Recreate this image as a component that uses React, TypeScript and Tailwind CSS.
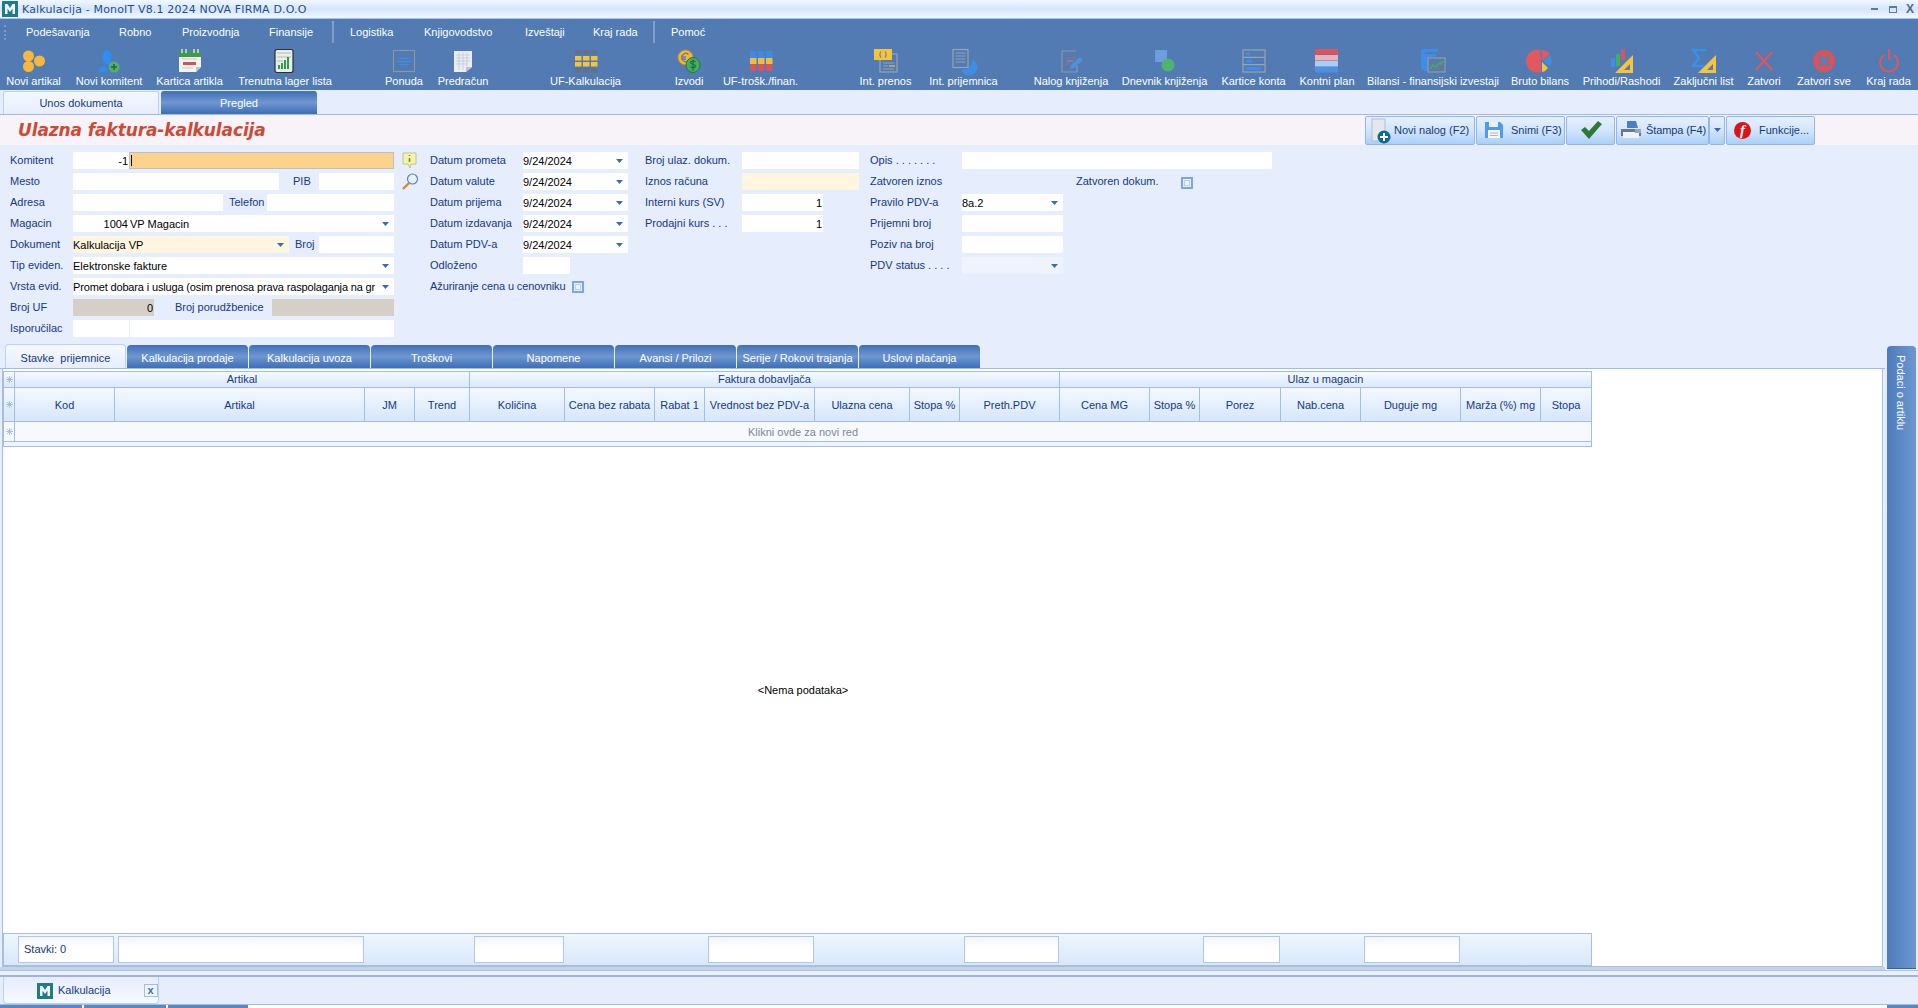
import React from 'react';

const NAVY = 'text-[#15397f]';

const menus = [
  { label: 'Podešavanja', cls: 'w-[64px] ml-[20px]' },
  { label: 'Robno', cls: 'w-[34px] ml-[29px]' },
  { label: 'Proizvodnja', cls: 'w-[58px] ml-[29px]' },
  { label: 'Finansije', cls: 'w-[45px] ml-[29px]' },
  { sep: true, cls: 'ml-[18px]' },
  { label: 'Logistika', cls: 'w-[46px] ml-[16px]' },
  { label: 'Knjigovodstvo', cls: 'w-[72px] ml-[28px]' },
  { label: 'Izveštaji', cls: 'w-[40px] ml-[29px]' },
  { label: 'Kraj rada', cls: 'w-[44px] ml-[28px]' },
  { sep: true, cls: 'ml-[16px]' },
  { label: 'Pomoć', cls: 'w-[34px] ml-[16px]' },
];

const IconNoviArtikal = () => (
  <>
    <circle cx="6.5" cy="7" r="5.5" fill="#f5b73c" />
    <circle cx="17.5" cy="12" r="5.5" fill="#f5b73c" />
    <circle cx="6.5" cy="17.5" r="5.5" fill="#f5b73c" />
  </>
);
const IconNoviKomitent = () => (
  <>
    <ellipse cx="10" cy="8" rx="4.500" ry="7.500" fill="#2f8cf0" />
    <path d="M2 23c0-4 2-6 4.500-6s4 2 4 6z" fill="#2f8cf0" />
    <circle cx="17" cy="18" r="5.5" fill="#4fb36f" />
    <path d="M17 15v6M14 18h6" stroke="#1d6a3a" strokeWidth="1.6" />
  </>
);
const IconKartica = () => (
  <>
    <path d="M1 3h22v15l-5 5H1z" fill="#f3f4f0" />
    <rect x="1" y="2" width="22" height="6" fill="#3f9a4c" />
    <path d="M4 0v4M8 0v4M16 0v4M20 0v4" stroke="#dfe6dc" strokeWidth="1.4" />
    <rect x="5" y="13" width="13" height="3" fill="#d6525a" />
    <path d="M4 10h15M4 19h11" stroke="#c5ccc4" strokeWidth="1" />
    <path d="M18 23v-5h5z" fill="#bfc6bd" />
  </>
);
const IconLager = () => (
  <>
    <rect x="2" y="0.5" width="18" height="23" rx="2" fill="#e9eee8" stroke="#27303a" strokeWidth="1.2" />
    <path d="M4 4h14M4 8h14M4 12h6" stroke="#b3bcb5" strokeWidth="1" />
    <path d="M6 20v-4M9 20v-6M12 20v-9M15 20v-12" stroke="#2f9c49" strokeWidth="2" />
  </>
);
const IconPonuda = () => (
  <>
    <rect x="1.5" y="1.5" width="21" height="21" fill="none" stroke="#8f96a3" strokeWidth="1.2" />
    <path d="M7 9.5h10M5 12.5h14M7 15.5h10" stroke="#3c8ee6" strokeWidth="1.2" />
  </>
);
const IconPredracun = () => (
  <>
    <path d="M3 2h18v16l-6 5H3z" fill="#e9edf4" />
    <path d="M5 6h14M5 9h14M5 12h14M5 15h12M8 3v18M12 3v18M16 3v14" stroke="#c3cad8" strokeWidth="0.8" />
    <path d="M15 23v-5h6z" fill="#b9c0cd" />
  </>
);
const IconUfKalk = () => (
  <>
    {[1, 7, 13, 19].map((y, r) =>
      [1, 9, 17].map((x) => (
        <rect key={`${x}-${y}`} x={x} y={y} width="6.5" height="4.5" fill={r === 0 || r === 3 ? '#5e7290' : '#f5c33c'} />
      ))
    )}
  </>
);
const IconIzvodi = () => (
  <>
    <circle cx="8.5" cy="8.5" r="7.5" fill="#f0b63c" stroke="#c98a1e" strokeWidth="1" />
    <path d="M11.5 5.5a4 4 0 1 0 0 6M4 8h5M4 10h5" stroke="#6f7f90" strokeWidth="1.3" fill="none" />
    <ellipse cx="16" cy="16" rx="7" ry="7.5" fill="#45ad62" stroke="#237a3d" strokeWidth="1" />
    <path d="M18.5 13c-1-1.5-5-1.5-5 .6 0 2.4 5 1 5 3.6 0 1.8-4 1.8-5 .3M16 10.5v11" stroke="#1e6a37" strokeWidth="1.1" fill="none" />
  </>
);
const IconTrosk = () => (
  <>
    {[1, 9, 17].map((x) => (
      <g key={x}>
        <rect x={x} y="2" width="6.5" height="7" fill="#3d8be0" />
        <rect x={x} y="9" width="6.5" height="6" fill="#f3bb3f" />
        <rect x={x} y="15" width="6.5" height="7" rx="1.5" fill="#d9555d" />
      </g>
    ))}
  </>
);
const IconIntPrenos = () => (
  <>
    <rect x="6" y="5" width="17" height="18" fill="none" stroke="#9aa2ad" strokeWidth="1.2" />
    <path d="M9 14h11M9 17h5M9 20h11" stroke="#9aa2ad" strokeWidth="1" />
    <path d="M15 17h6" stroke="#f5c33c" strokeWidth="1.2" />
    <rect x="0" y="0" width="18" height="11" fill="#f5c33c" />
    <path d="M7 2.5c-1.5 2-1.5 4 0 6M11 2.5c1.5 2 1.5 4 0 6" stroke="#7b7f84" strokeWidth="1.2" fill="none" />
  </>
);
const IconIntPrijem = () => (
  <>
    <rect x="1" y="0.5" width="15" height="18" fill="none" stroke="#9aa2ad" strokeWidth="1.2" />
    <path d="M3.5 4h10M3.5 7h10M3.5 10h10M3.5 13h10" stroke="#9aa2ad" strokeWidth="1" />
    <path d="M20 10a8.500 8.500 0 1 1-11 11c4 0 7-1 9-4 1.500-2 2-4 2-7z" fill="#3c8ee6" />
  </>
);
const IconNalog = () => (
  <>
    <path d="M17 2H3v21h15v-6" fill="none" stroke="#8f96a3" strokeWidth="1.2" />
    <path d="M6 9h10M6 15h5" stroke="#d9555d" strokeWidth="1.2" />
    <path d="M8 12h6" stroke="#8f96a3" strokeWidth="1" />
    <path d="M11 20l1-4 9-8 3 3-9 8z" fill="#4d90dd" />
  </>
);
const IconDnevnik = () => (
  <>
    <rect x="2" y="1" width="12" height="12" fill="#6d9ddc" />
    <circle cx="15" cy="16" r="6.500" fill="#4fb36f" />
  </>
);
const IconKartice = () => (
  <>
    <rect x="1" y="1" width="22" height="22" fill="none" stroke="#9aa2ad" strokeWidth="1.2" />
    <path d="M1 8.300h22M1 15.600h22" stroke="#9aa2ad" strokeWidth="1.2" />
    <rect x="4" y="3.300" width="4" height="3" fill="#3c8ee6" />
    <rect x="4" y="10.600" width="6" height="3" fill="#3c8ee6" />
    <rect x="4" y="18" width="15" height="3" fill="#3c8ee6" />
  </>
);
const IconKontni = () => (
  <>
    <rect x="0" y="0" width="23" height="5.500" fill="#d9555d" />
    <rect x="0" y="6" width="23" height="5.500" fill="#eeb0b8" />
    <rect x="0" y="12" width="23" height="5.500" fill="#a9cdf5" />
    <rect x="0" y="18" width="23" height="5.500" fill="#4b91e3" />
  </>
);
const IconBilansi = () => (
  <>
    <path d="M0 2a2 2 0 0 1 2-2h15v3H4v18H2a2 2 0 0 1-2-2z" fill="#3c8ee6" />
    <path d="M3 5h12v3H7v14H3z" fill="#3c8ee6" />
    <rect x="7" y="9" width="17" height="14" fill="#5d7aa5" stroke="#9aa2ad" strokeWidth="1" />
    <path d="M9 20l3-4 3 2 3-4 2 1 2-3" stroke="#3fb05f" strokeWidth="1.400" fill="none" />
  </>
);
const IconBruto = () => (
  <>
    <path d="M13 12L12.500 1A11.500 11.500 0 1 0 13 23z" fill="#de5a60" />
    <path d="M14 1a11 11 0 0 1 8 4l-8 7z" fill="#de5a60" />
    <path d="M22 6a11 11 0 0 1 0 11l-7-5z" fill="#3c8ee6" />
    <path d="M14 13l6 6a9 9 0 0 1-6 4z" fill="#f5c33c" />
  </>
);
const IconPrihodi = () => (
  <>
    <rect x="1" y="9" width="4" height="9" fill="#3c8ee6" />
    <rect x="6" y="5" width="4" height="12" fill="#3fb05f" />
    <rect x="11" y="0" width="4" height="11" fill="#d9555d" />
    <path d="M23 6v18H5z" fill="#f5c33c" />
    <path d="M20 15v6h-6z" fill="#5d7aa5" />
  </>
);
const IconZakljucni = () => (
  <>
    <path d="M14 1H1l6 8-6 8h12" fill="none" stroke="#3c8ee6" strokeWidth="2.600" />
    <path d="M24 6v18H6z" fill="#f5c33c" />
    <path d="M21 15v6h-6z" fill="#5d7aa5" />
  </>
);
const IconZatvori = () => <path d="M4 3l16 18M20 3L4 21" stroke="#e0565a" strokeWidth="2" />;
const IconZatvoriSve = () => (
  <>
    <circle cx="12" cy="12" r="11" fill="#dd5258" />
    <path d="M7 7l10 10M17 7L7 17" stroke="#5b7eb2" strokeWidth="3.500" />
  </>
);
const IconKraj = () => (
  <>
    <path d="M7 6a9 9 0 1 0 10 0" fill="none" stroke="#e0565a" strokeWidth="2" />
    <path d="M12 0v11" stroke="#e0565a" strokeWidth="2" />
  </>
);

const tools = [
  { label: 'Novi artikal', cls: 'w-[53px] ml-[7px]', icon: <IconNoviArtikal /> },
  { label: 'Novi komitent', cls: 'w-[64px] ml-[17px]', icon: <IconNoviKomitent /> },
  { label: 'Kartica artikla', cls: 'w-[65px] ml-[16px]', icon: <IconKartica /> },
  { label: 'Trenutna lager lista', cls: 'w-[92px] ml-[17px]', icon: <IconLager /> },
  { label: 'Ponuda', cls: 'w-[36px] ml-[55px]', icon: <IconPonuda /> },
  { label: 'Predračun', cls: 'w-[48px] ml-[17px]', icon: <IconPredracun /> },
  { label: 'UF-Kalkulacija', cls: 'w-[65px] ml-[66px]', icon: <IconUfKalk /> },
  { label: 'Izvodi', cls: 'w-[28px] ml-[57px]', icon: <IconIzvodi /> },
  { label: 'UF-trošk./finan.', cls: 'w-[75px] ml-[20px]', icon: <IconTrosk /> },
  { label: 'Int. prenos', cls: 'w-[53px] ml-[61px]', icon: <IconIntPrenos /> },
  { label: 'Int. prijemnica', cls: 'w-[69px] ml-[17px]', icon: <IconIntPrijem /> },
  { label: 'Nalog knjiženja', cls: 'w-[72px] ml-[37px]', icon: <IconNalog /> },
  { label: 'Dnevnik knjiženja', cls: 'w-[83px] ml-[16px]', icon: <IconDnevnik /> },
  { label: 'Kartice konta', cls: 'w-[63px] ml-[16px]', icon: <IconKartice /> },
  { label: 'Kontni plan', cls: 'w-[54px] ml-[15px]', icon: <IconKontni /> },
  { label: 'Bilansi - finansijski izvestaji', cls: 'w-[128px] ml-[15px]', icon: <IconBilansi /> },
  { label: 'Bruto bilans', cls: 'w-[56px] ml-[15px]', icon: <IconBruto /> },
  { label: 'Prihodi/Rashodi', cls: 'w-[75px] ml-[16px]', icon: <IconPrihodi /> },
  { label: 'Zaključni list', cls: 'w-[57px] ml-[16px]', icon: <IconZakljucni /> },
  { label: 'Zatvori', cls: 'w-[34px] ml-[15px]', icon: <IconZatvori /> },
  { label: 'Zatvori sve', cls: 'w-[54px] ml-[16px]', icon: <IconZatvoriSve /> },
  { label: 'Kraj rada', cls: 'w-[45px] ml-[15px]', icon: <IconKraj /> },
];

const innerTabs = [
  'Kalkulacija prodaje',
  'Kalkulacija uvoza',
  'Troškovi',
  'Napomene',
  'Avansi / Prilozi',
  'Serije / Rokovi trajanja',
  'Uslovi plaćanja',
];

const groups = [
  { label: 'Artikal', cls: 'w-[455px]' },
  { label: 'Faktura dobavljača', cls: 'w-[590px]' },
  { label: 'Ulaz u magacin', cls: 'w-[531px]' },
];

const columns = [
  { label: 'Kod', cls: 'w-[100px]' },
  { label: 'Artikal', cls: 'w-[250px]' },
  { label: 'JM', cls: 'w-[50px]' },
  { label: 'Trend', cls: 'w-[55px]' },
  { label: 'Količina', cls: 'w-[95px]' },
  { label: 'Cena bez rabata', cls: 'w-[90px]' },
  { label: 'Rabat 1', cls: 'w-[50px]' },
  { label: 'Vrednost bez PDV-a', cls: 'w-[110px]' },
  { label: 'Ulazna cena', cls: 'w-[95px]' },
  { label: 'Stopa %', cls: 'w-[50px]' },
  { label: 'Preth.PDV', cls: 'w-[100px]' },
  { label: 'Cena MG', cls: 'w-[90px]' },
  { label: 'Stopa %', cls: 'w-[50px]' },
  { label: 'Porez', cls: 'w-[81px]' },
  { label: 'Nab.cena', cls: 'w-[80px]' },
  { label: 'Duguje mg', cls: 'w-[100px]' },
  { label: 'Marža (%) mg', cls: 'w-[80px]' },
  { label: 'Stopa', cls: 'w-[50px]' },
];

const summaryCells = [
  { text: 'Stavki: 0', cls: 'w-[96px] ml-[14px]' },
  { text: '', cls: 'w-[246px] ml-[4px]' },
  { text: '', cls: 'w-[90px] ml-[110px]' },
  { text: '', cls: 'w-[106px] ml-[144px]' },
  { text: '', cls: 'w-[95px] ml-[150px]' },
  { text: '', cls: 'w-[77px] ml-[144px]' },
  { text: '', cls: 'w-[96px] ml-[84px]' },
];

const Arrow = () => (
  <svg width="7" height="4" viewBox="0 0 7 4" className="shrink-0">
    <path d="M0 0h7L3.500 4z" fill="#3d6cae" />
  </svg>
);

const Label = ({ text, cls }: { text: string; cls: string }) => (
  <span className={`${cls} ${NAVY} shrink-0 whitespace-nowrap`}>{text}</span>
);

const Row = ({ children }: { children: React.ReactNode }) => (
  <div className="flex items-center h-[17px]">{children}</div>
);

const Input = ({ cls, text, arrow, right }: { cls: string; text?: string; arrow?: boolean; right?: boolean }) => (
  <div className={`${cls} h-[17px] shrink-0 flex items-center text-black overflow-hidden ${right ? 'pr-[1px]' : ''}`}>
    <span className="whitespace-nowrap overflow-hidden flex-1 min-w-0 leading-[14px]">
      {right ? <span className="block text-right">{text}</span> : text}
    </span>
    {arrow && (
      <span className="w-[17px] shrink-0 flex justify-center">
        <Arrow />
      </span>
    )}
  </div>
);

const Check = () => (
  <div className="w-[12px] h-[12px] border-2 border-[#7ba6de] bg-[#e6edfd] flex items-center justify-center shrink-0">
    <div className="w-[6px] h-[6px] border border-[#c0cfe8] bg-[#eef3fd]" />
  </div>
);

const HeadButton = ({ cls, children }: { cls: string; children: React.ReactNode }) => (
  <div className={`${cls} h-[29px] shrink-0 flex items-center border border-[#94b6e6] rounded-[2px] bg-linear-to-b from-[#e6f0fd] via-[#d2e5fb] to-[#a9d0f7] ${NAVY}`}>
    {children}
  </div>
);

const Sel = () => (
  <svg width="7" height="7" viewBox="0 0 7 7" className="shrink-0">
    <path d="M3.500 0v7M0 3.500h7M1 1l5 5M6 1L1 6" stroke="#9db5d6" strokeWidth="0.8" />
  </svg>
);

const AppIcon = ({ size }: { size: number }) => (
  <svg width={size} height={size} viewBox="0 0 16 16" className="shrink-0">
    <rect width="16" height="16" fill="#1f7a8c" />
    <path d="M3 13V3h2.500L8 7l2.500-4H13v10h-2.500V7.500L8 11 5.500 7.500V13z" fill="#f2f6f8" />
  </svg>
);

export default function App() {
  return (
    <div className="w-[1918px] h-[1008px] flex flex-col overflow-hidden bg-[#e6edfd] text-[11px] leading-none font-['Liberation_Sans',Arial,sans-serif]">
      {/* title bar */}
      <div className="h-[19px] shrink-0 flex items-center border-b border-[#a9c3e8] bg-linear-to-b from-[#f1f7ff] via-[#d5e6fd] to-[#f1f7ff]">
        <span className="ml-[2px]"><AppIcon size={16} /></span>
        <span className="ml-[4px] font-['DejaVu_Sans',sans-serif] text-[11px] tracking-[0.15px] text-[#1f4f8c]">Kalkulacija - MonoIT V8.1 2024 NOVA FIRMA D.O.O</span>
        <div className="ml-auto flex items-center">
          <div className="w-[7px] h-[2px] bg-[#5d7aa5]" />
          <div className="ml-[11px] w-[8px] h-[7px] border border-[#5d7aa5] border-t-2" />
          <span className="ml-[9px] mr-[4px] font-bold text-[12px] text-[#4a6a98]">X</span>
        </div>
      </div>

      {/* menu + toolbar */}
      <div className="h-[71px] shrink-0 bg-[#517bb2] text-white">
        <div className="h-[26px] flex items-center">
          <div className="ml-[4px] h-[15px] w-[2px] border-l-2 border-dotted border-[#7d9cc6]" />
          {menus.map((m, i) =>
            m.sep ? (
              <div key={i} className={`${m.cls} h-[22px] w-[2px] bg-[#7f9fcc]`} />
            ) : (
              <span key={i} className={`${m.cls} whitespace-nowrap`}>{m.label}</span>
            )
          )}
        </div>
        <div className="h-[45px] flex">
          {tools.map((t) => (
            <div key={t.label} className={`${t.cls} shrink-0 flex flex-col items-center pt-[4px]`}>
              <svg width="24" height="24" viewBox="0 0 24 24" className="shrink-0 overflow-visible">{t.icon}</svg>
              <span className="mt-[3px] whitespace-nowrap">{t.label}</span>
            </div>
          ))}
        </div>
      </div>

      {/* view tabs */}
      <div className="h-[24px] shrink-0 flex items-end pl-[3px] gap-[2px] pt-[1px]">
        <div className={`w-[156px] h-[23px] flex items-center justify-center rounded-t-[3px] border border-b-0 border-[#b9d2f2] bg-linear-to-b from-[#f4f9ff] to-[#e6edfd] ${NAVY}`}>Unos dokumenta</div>
        <div className="w-[156px] h-[23px] pt-[2px] flex items-center justify-center rounded-t-[3px] text-white bg-linear-to-b from-[#3f6fb8] via-[#6f97d0] to-[#3d6eb8]">Pregled</div>
      </div>

      {/* document */}
      <div className="h-[856px] shrink-0 flex flex-col border-t border-[#9dbcea]">
        <div className="h-[30px] shrink-0 flex items-center bg-[#f8f3f8] pl-[18px] pr-[103px]">
          <span className="font-['DejaVu_Sans',sans-serif] font-bold italic text-[17px] text-[#cc4a35] tracking-[-0.1px]">Ulazna faktura-kalkulacija</span>
          <div className="ml-auto flex gap-[1px]">
            <HeadButton cls="w-[110px]">
              <svg width="20" height="28" viewBox="0 0 20 28" className="ml-[5px] shrink-0">
                <rect x="1" y="3" width="13" height="22" fill="#e4e8ee" stroke="#b8bec8" />
                <circle cx="13" cy="21" r="6.500" fill="#0f6a92" />
                <path d="M13 17v8M9 21h8" stroke="#fff" strokeWidth="2" />
              </svg>
              <span className="ml-[3px] whitespace-nowrap">Novi nalog (F2)</span>
            </HeadButton>
            <HeadButton cls="w-[89px]">
              <svg width="18" height="18" viewBox="0 0 18 18" className="ml-[8px] shrink-0">
                <path d="M0 1h15l3 3v13H0z" fill="#4f9bea" />
                <rect x="4" y="1" width="9" height="5" fill="#e9f2fc" />
                <rect x="3" y="9" width="12" height="8" fill="#f4f7fb" />
                <path d="M5 12h8M5 14.500h8" stroke="#a8b4c4" />
              </svg>
              <span className="ml-[8px] whitespace-nowrap">Snimi (F3)</span>
            </HeadButton>
            <HeadButton cls="w-[49px] justify-center">
              <svg width="22" height="18" viewBox="0 0 22 18">
                <path d="M1 9l4-3 4 4L18 0l4 3L9 18z" fill="#2c7a35" />
              </svg>
            </HeadButton>
            <HeadButton cls="w-[93px]">
              <svg width="22" height="20" viewBox="0 0 22 20" className="ml-[3px] shrink-0">
                <path d="M7 1h9l2 7H7z" fill="#4a7fc4" />
                <path d="M1 9h20v7H1z" fill="#6a7788" />
                <path d="M3 12h16v6H3z" fill="#eef1f5" />
                <path d="M15 9h6v4h-6z" fill="#9aa6b4" />
              </svg>
              <span className="ml-[4px] whitespace-nowrap tracking-[-0.1px]">Štampa (F4)</span>
            </HeadButton>
            <HeadButton cls="w-[16px] -ml-[1px] justify-center"><Arrow /></HeadButton>
            <HeadButton cls="w-[89px]">
              <span className="ml-[7px] w-[17px] h-[17px] rounded-full bg-[#d9141b] flex items-center justify-center font-['Liberation_Serif',serif] font-bold italic text-[15px] text-white shrink-0">f</span>
              <span className="ml-[8px] whitespace-nowrap">Funkcije...</span>
            </HeadButton>
          </div>
        </div>

        {/* form */}
        <div className="h-[200px] shrink-0 flex pt-[7px]">
          <div className="w-[394px] shrink-0 pl-[10px] flex flex-col gap-[4px]">
            <Row>
              <Label text="Komitent" cls="w-[63px]" />
              <Input cls="w-[56px] bg-white" text="-1" right />
              <div className="flex-1 h-[17px] bg-[#fdd28a] border border-[#b7bfd0] flex items-center pl-[1px]"><div className="w-[1px] h-[11px] bg-black" /></div>
            </Row>
            <Row>
              <Label text="Mesto" cls="w-[63px]" />
              <Input cls="w-[206px] bg-white" />
              <Label text="PIB" cls="w-[40px] pl-[14px]" />
              <Input cls="w-[75px] bg-white" />
            </Row>
            <Row>
              <Label text="Adresa" cls="w-[63px]" />
              <Input cls="w-[150px] bg-white" />
              <Label text="Telefon" cls="w-[44px] pl-[6px]" />
              <Input cls="w-[127px] bg-white" />
            </Row>
            <Row>
              <Label text="Magacin" cls="w-[63px]" />
              <Input cls="w-[56px] bg-white" text="1004" right />
              <Input cls="w-[265px] bg-white pl-[1px]" text="VP Magacin" arrow />
            </Row>
            <Row>
              <Label text="Dokument" cls="w-[63px]" />
              <Input cls="w-[216px] bg-[#fff6e0]" text="Kalkulacija VP" arrow />
              <Label text="Broj" cls="w-[30px] pl-[6px]" />
              <Input cls="w-[75px] bg-white" />
            </Row>
            <Row>
              <Label text="Tip eviden." cls="w-[63px]" />
              <Input cls="w-[321px] bg-white" text="Elektronske fakture" arrow />
            </Row>
            <Row>
              <Label text="Vrsta evid." cls="w-[63px]" />
              <Input cls="w-[321px] bg-white tracking-[-0.15px]" text="Promet dobara i usluga (osim prenosa prava raspolaganja na gr" arrow />
            </Row>
            <Row>
              <Label text="Broj UF" cls="w-[63px]" />
              <Input cls="w-[81px] bg-[#d4d0c8]" text="0" right />
              <Label text="Broj porudžbenice" cls="w-[118px] pl-[21px]" />
              <Input cls="w-[122px] bg-[#d4d0c8]" />
            </Row>
            <Row>
              <Label text="Isporučilac" cls="w-[63px]" />
              <Input cls="w-[56px] bg-white" />
              <Input cls="w-[264px] ml-[1px] bg-white" />
            </Row>
          </div>

          <div className="w-[36px] shrink-0 pl-[8px] flex flex-col">
            <svg width="15" height="17" viewBox="0 0 15 17">
              <path d="M1 1h13v11H9l-1 4-2-4H1z" fill="#f8f2a8" stroke="#c4c090" />
              <path d="M7.500 3v1M7.500 6v4" stroke="#4c9a50" strokeWidth="1.600" />
            </svg>
            <svg width="17" height="17" viewBox="0 0 17 17" className="mt-[4px]">
              <circle cx="10.500" cy="6" r="5" fill="#e6f2fc" stroke="#5d86b8" strokeWidth="1.200" />
              <path d="M7 10l-6 6" stroke="#d98a2b" strokeWidth="2.400" />
            </svg>
          </div>

          <div className="w-[215px] shrink-0 flex flex-col gap-[4px]">
            {['Datum prometa', 'Datum valute', 'Datum prijema', 'Datum izdavanja', 'Datum PDV-a'].map((l) => (
              <Row key={l}>
                <Label text={l} cls="w-[93px]" />
                <Input cls="w-[105px] bg-white" text="9/24/2024" arrow />
              </Row>
            ))}
            <Row>
              <Label text="Odloženo" cls="w-[93px]" />
              <Input cls="w-[47px] bg-white" />
            </Row>
            <Row>
              <Label text="Ažuriranje cena u cenovniku" cls="w-[142px] tracking-[-0.1px]" />
              <Check />
            </Row>
          </div>

          <div className="w-[225px] shrink-0 flex flex-col gap-[4px]">
            <Row>
              <Label text="Broj ulaz. dokum." cls="w-[97px]" />
              <Input cls="w-[117px] bg-white" />
            </Row>
            <Row>
              <Label text="Iznos računa" cls="w-[97px]" />
              <Input cls="w-[117px] bg-[#fff6e0]" />
            </Row>
            <Row>
              <Label text="Interni kurs (SV)" cls="w-[97px]" />
              <Input cls="w-[81px] bg-white" text="1" right />
            </Row>
            <Row>
              <Label text="Prodajni kurs . . ." cls="w-[97px]" />
              <Input cls="w-[81px] bg-white" text="1" right />
            </Row>
          </div>

          <div className="flex-1 flex flex-col gap-[4px]">
            <Row>
              <Label text="Opis . . . . . . ." cls="w-[92px]" />
              <Input cls="w-[310px] bg-white" />
            </Row>
            <Row>
              <Label text="Zatvoren iznos" cls="w-[206px]" />
              <Label text="Zatvoren dokum." cls="w-[105px]" />
              <div className="mt-[2px]"><Check /></div>
            </Row>
            <Row>
              <Label text="Pravilo PDV-a" cls="w-[92px]" />
              <Input cls="w-[101px] bg-white" text="8a.2" arrow />
            </Row>
            <Row>
              <Label text="Prijemni broj" cls="w-[92px]" />
              <Input cls="w-[101px] bg-white" />
            </Row>
            <Row>
              <Label text="Poziv na broj" cls="w-[92px]" />
              <Input cls="w-[101px] bg-white" />
            </Row>
            <Row>
              <Label text="PDV status . . . ." cls="w-[92px]" />
              <Input cls="w-[101px] bg-[#eef3fd]" arrow />
            </Row>
          </div>
        </div>

        {/* detail area */}
        <div className="h-[625px] shrink-0 flex">
          <div className="w-[1885px] shrink-0 flex flex-col">
            <div className="h-[24px] shrink-0 flex items-end pl-[5px] gap-[1px] border-b border-[#9dbcea]">
              <div className={`w-[121px] h-[24px] pt-[4px] flex items-center justify-center rounded-t-[4px] border border-b-0 border-[#b9d2f2] bg-linear-to-b from-[#f6faff] to-[#e6edfd] ${NAVY}`}>Stavke&nbsp; prijemnice</div>
              {innerTabs.map((t) => (
                <div key={t} className="w-[121px] h-[23px] pt-[4px] flex items-center justify-center rounded-t-[4px] text-white whitespace-nowrap bg-linear-to-b from-[#3f6fb8] via-[#6f97d0] to-[#3d6eb8]">{t}</div>
              ))}
            </div>
            <div className="h-[598px] shrink-0 ml-[2px] mr-[2px] bg-white border border-t-0 border-[#a9bddd] flex flex-col pt-[2px]">
              {/* grid */}
              <div className={`w-[1589px] shrink-0 border-x border-[#a4bde3] ${NAVY}`}>
                <div className="flex h-[17px] border-y border-[#a4bde3] bg-linear-to-b from-[#f4f9ff] to-[#dbe9fc]">
                  <div className="w-[11px] shrink-0 flex items-center justify-center border-r border-[#a4bde3]"><Sel /></div>
                  {groups.map((g) => (
                    <div key={g.label} className={`${g.cls} shrink-0 flex items-center justify-center border-r border-[#a4bde3] last:border-r-0`}>{g.label}</div>
                  ))}
                </div>
                <div className="flex h-[34px] border-b border-[#a4bde3] bg-linear-to-b from-[#f4f9ff] to-[#d6e6fb]">
                  <div className="w-[11px] shrink-0 flex items-center justify-center border-r border-[#a4bde3]"><Sel /></div>
                  {columns.map((c, i) => (
                    <div key={`${c.label}-${i}`} className={`${c.cls} shrink-0 pt-[2px] flex items-center justify-center border-r border-[#a4bde3] last:border-r-0 whitespace-nowrap`}>{c.label}</div>
                  ))}
                </div>
                <div className="flex h-[20px] border-b border-[#a4bde3] bg-[#f6f9ff]">
                  <div className="w-[11px] shrink-0 flex items-center justify-center border-r border-[#a4bde3]"><Sel /></div>
                  <div className="flex-1 flex items-center justify-center pt-[1px] text-[#808890]">Klikni ovde za novi red</div>
                </div>
                <div className="h-[5px] border-b border-[#a4bde3] bg-[#eef3fc]" />
              </div>
              <div className="flex-1 min-h-0 flex w-[1589px] items-center justify-center pl-[11px] text-black">&lt;Nema podataka&gt;</div>
              {/* summary */}
              <div className="w-[1589px] h-[33px] shrink-0 flex items-center border border-[#a9bddd] bg-linear-to-b from-[#eef6fe] to-[#d8e8fb]">
                {summaryCells.map((s, i) => (
                  <div key={i} className={`${s.cls} h-[27px] shrink-0 flex items-center pl-[5px] border border-[#b1c6e8] ${NAVY} bg-linear-to-b from-[#f2f6fd] via-white to-white`}>{s.text}</div>
                ))}
              </div>
            </div>
            <div className="h-[3px] shrink-0 bg-[#c5d3ea]" />
          </div>
          <div className="w-[29px] ml-[2px] mt-[1px] h-[623px] shrink-0 rounded-t-[4px] flex justify-center pt-[9px] pr-[3px] bg-linear-to-r from-[#4d7cbc] to-[#6d97d0] border-b border-[#3d5f90]">
            <span className="text-white whitespace-nowrap [writing-mode:vertical-rl] h-fit">Podaci o artiklu</span>
          </div>
        </div>
      </div>

      {/* open windows */}
      <div className="h-[7px] shrink-0 border-t border-[#a9c3e8] border-b-2 border-b-[#a0b4d6] bg-[#eaf0fc]" />
      <div className="h-[28px] shrink-0 flex border-b border-[#9dbcea]">
        <div className={`ml-[3px] w-[156px] h-[27px] pt-[1px] flex items-center rounded-b-[4px] border border-t-0 border-[#b9d2f2] bg-linear-to-b from-[#e6edfd] to-[#f6faff] ${NAVY}`}>
          <span className="ml-[33px]"><AppIcon size={16} /></span>
          <span className="ml-[5px]">Kalkulacija</span>
          <span className="ml-[33px] w-[14px] h-[13px] flex items-center justify-center border border-[#a4bde3] text-[11px] font-bold text-[#3d6cae]">x</span>
        </div>
      </div>
      <div className="h-[3px] shrink-0 flex items-start bg-white">
        <div className="w-[82px] h-full bg-[#5d86c0] mr-[2px]" />
        <div className="w-[82px] h-full bg-[#5d86c0] mr-[2px]" />
        <div className="w-[80px] h-full bg-[#5d86c0]" />
        <div className="ml-auto w-[31px] h-full bg-[#5d86c0]" />
      </div>
    </div>
  );
}
